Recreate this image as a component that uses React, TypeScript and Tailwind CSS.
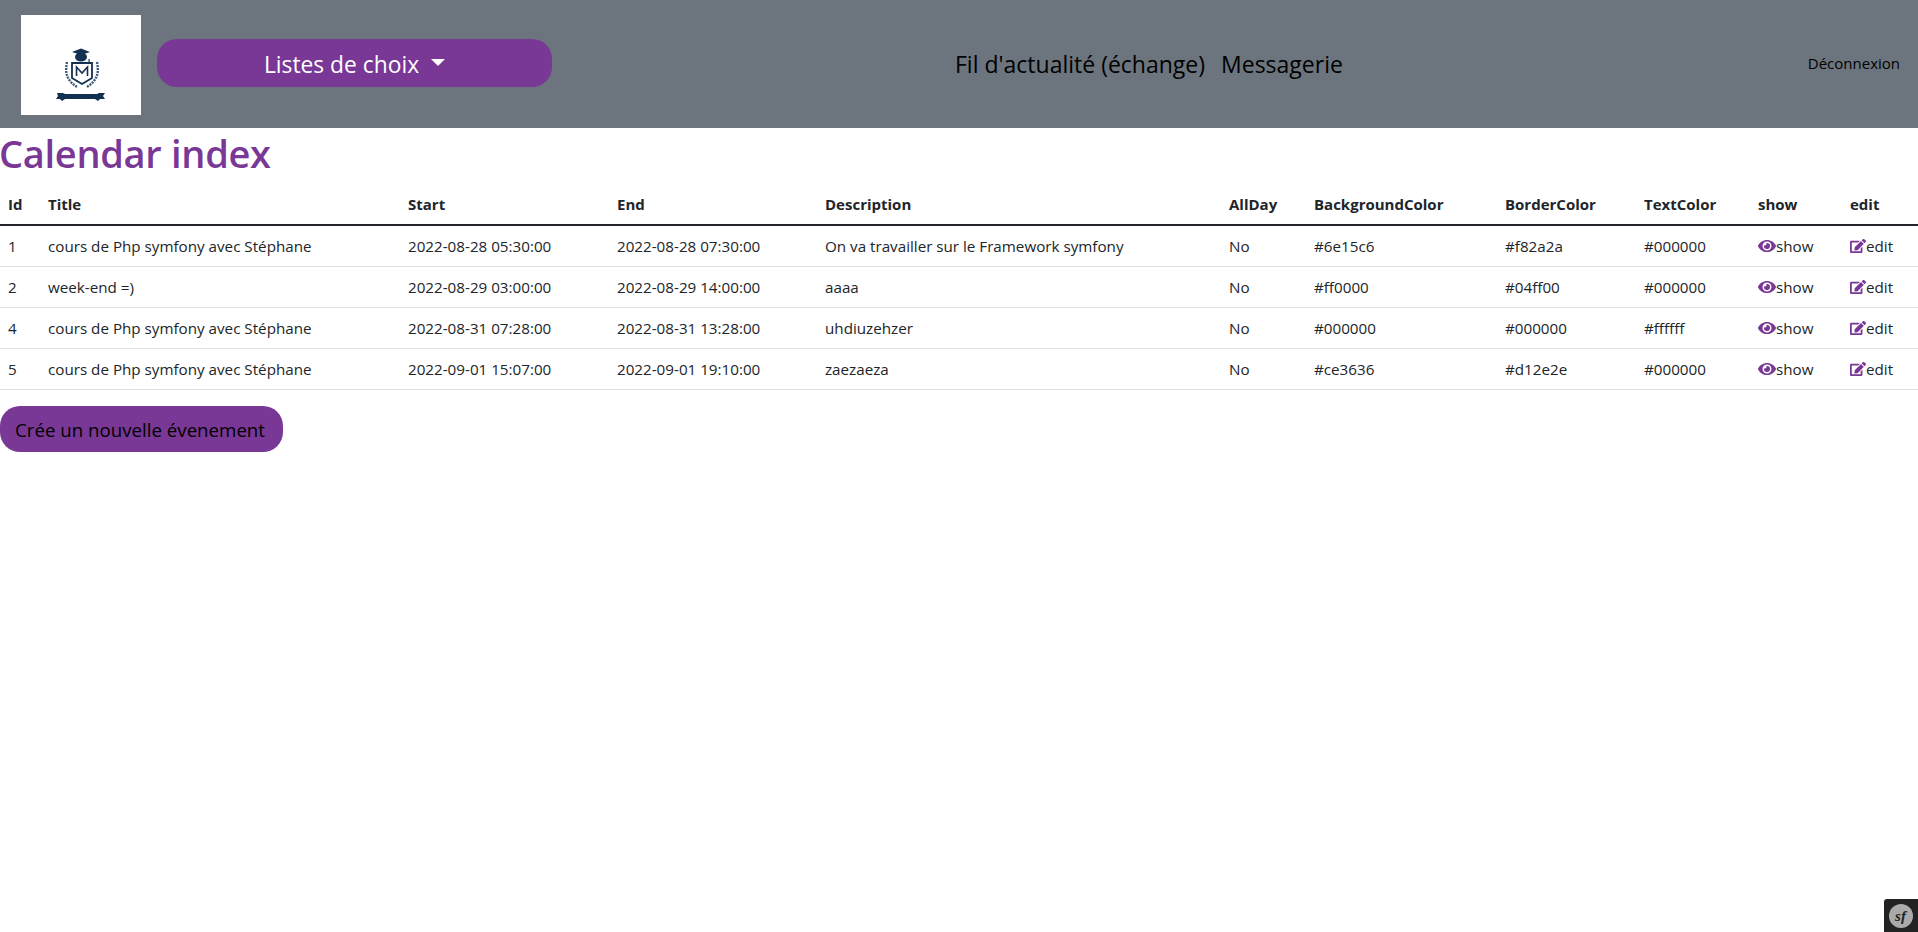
import { FaEye, FaEdit } from "react-icons/fa";

const events = [
  { id: 1, title: "cours de Php symfony avec Stéphane", start: "2022-08-28 05:30:00", end: "2022-08-28 07:30:00", description: "On va travailler sur le Framework symfony", bg: "#6e15c6", border: "#f82a2a", text: "#000000" },
  { id: 2, title: "week-end =)", start: "2022-08-29 03:00:00", end: "2022-08-29 14:00:00", description: "aaaa", bg: "#ff0000", border: "#04ff00", text: "#000000" },
  { id: 4, title: "cours de Php symfony avec Stéphane", start: "2022-08-31 07:28:00", end: "2022-08-31 13:28:00", description: "uhdiuzehzer", bg: "#000000", border: "#000000", text: "#ffffff" },
  { id: 5, title: "cours de Php symfony avec Stéphane", start: "2022-09-01 15:07:00", end: "2022-09-01 19:10:00", description: "zaezaeza", bg: "#ce3636", border: "#d12e2e", text: "#000000" },
];

const heads = ["Id", "Title", "Start", "End", "Description", "AllDay", "BackgroundColor", "BorderColor", "TextColor", "show", "edit"];

function Logo() {
  return (
    <svg viewBox="0 0 120 100" className="block w-[120px] h-[100px]" fill="none">
      <g fill="#12304f">
        <ellipse cx="60" cy="42" rx="6" ry="4.5" />
        <path d="M51 37l9-3.5 9 3.5-9 3z" />
        <path d="M36 78h6l2 1h32l2-1h6l-2 3 2 3h-5l-2 2-3-2H44l-3 2-2-2h-4l2-3z" />
        <rect x="67.5" y="44" width="1.2" height="5" />
      </g>
      <path d="M51 48h20v15l-10 6-10-6z" stroke="#12304f" strokeWidth="1.8" />
      <path d="M55.5 61v-9l5.5 6 5.500-6v9" stroke="#12304f" strokeWidth="1.6" />
      <path d="M46 47c-2 10-1 18 10 25M76 47c2 10 1 18-10 25" stroke="#3f5a78" strokeWidth="2.4" strokeDasharray="2 1" />
    </svg>
  );
}

function SfToolbar() {
  return (
    <div className="fixed right-0 bottom-0 w-[34px] h-[33px] bg-[#222222] flex items-center justify-center rounded-tl-[3px]">
      <svg viewBox="0 0 24 24" className="w-[24px] h-[24px]">
        <circle cx="12" cy="12" r="12" fill="#aaaaaa" />
        <text x="11.500" y="17" textAnchor="middle" fontSize="15" fontStyle="italic" fontWeight="700" fontFamily="'Liberation Serif', serif" fill="#222222">sf</text>
      </svg>
    </div>
  );
}

export default function App() {
  return (
    <div className="min-h-[932px] bg-white text-[#212529] font-['Open_Sans',sans-serif] text-[15.2px]">
      <header className="h-[128px] bg-[#6c757d] flex items-center relative">
        <div className="ml-[21px] mt-[2px] bg-white">
          <Logo />
        </div>
        <button className="ml-[16px] w-[395px] h-[48px] pt-[4px] rounded-[20px] bg-[#793796] text-white text-[22.8px] flex items-center justify-center gap-[12px] mt-[-2px]">
          Listes de choix
          <span className="inline-block border-t-[7px] border-x-[7px] border-t-white border-x-transparent mt-[-5px]" />
        </button>
        <nav className="ml-[403px] flex gap-[16px] text-black text-[23px]">
          <a href="#">Fil d'actualité (échange)</a>
          <a href="#">Messagerie</a>
        </nav>
        <a href="#" className="absolute right-[18px] top-[52px] text-black text-[15px]">Déconnexion</a>
      </header>

      <h1 className="pt-[1px] h-[48px] text-[38px] leading-[48px] font-semibold text-[#793796] mb-[8px] ml-[-1px] tracking-[-0.3px]">Calendar index</h1>

      <table className="w-full table-fixed border-collapse">
        <colgroup>
          <col className="w-[40px]" />
          <col className="w-[360px]" />
          <col className="w-[209px]" />
          <col className="w-[208px]" />
          <col className="w-[404px]" />
          <col className="w-[85px]" />
          <col className="w-[191px]" />
          <col className="w-[139px]" />
          <col className="w-[114px]" />
          <col className="w-[92px]" />
          <col className="w-[76px]" />
        </colgroup>
        <thead>
          <tr className="border-b-2 border-[#212529]">
            {heads.map((h) => (
              <th key={h} className="p-2 text-left text-[15px] font-bold leading-[24px] whitespace-nowrap">{h}</th>
            ))}
          </tr>
        </thead>
        <tbody>
          {events.map((e) => (
            <tr key={e.id} className="border-b border-[#dee2e6]">
              <td className="p-2 leading-[24px]">{e.id}</td>
              <td className="p-2 leading-[24px] whitespace-nowrap">{e.title}</td>
              <td className="p-2 leading-[24px] whitespace-nowrap">{e.start}</td>
              <td className="p-2 leading-[24px] whitespace-nowrap">{e.end}</td>
              <td className="p-2 leading-[24px] whitespace-nowrap">{e.description}</td>
              <td className="p-2 leading-[24px]">No</td>
              <td className="p-2 leading-[24px]">{e.bg}</td>
              <td className="p-2 leading-[24px]">{e.border}</td>
              <td className="p-2 leading-[24px]">{e.text}</td>
              <td className="p-2 leading-[24px]">
                <a href="#" className="flex items-center">
                  <FaEye className="w-[18px] h-[16px] text-[#793796]" />show
                </a>
              </td>
              <td className="p-2 leading-[24px]">
                <a href="#" className="flex items-center">
                  <FaEdit className="w-[16px] h-[16px] text-[#793796]" />edit
                </a>
              </td>
            </tr>
          ))}
        </tbody>
      </table>

      <button className="block mt-[16px] h-[46px] w-[283px] pt-[2px] rounded-[20px] bg-[#793796] text-black text-[18.7px] pl-[15px] text-left whitespace-nowrap">
        Crée un nouvelle évenement
      </button>

      <SfToolbar />
    </div>
  );
}
